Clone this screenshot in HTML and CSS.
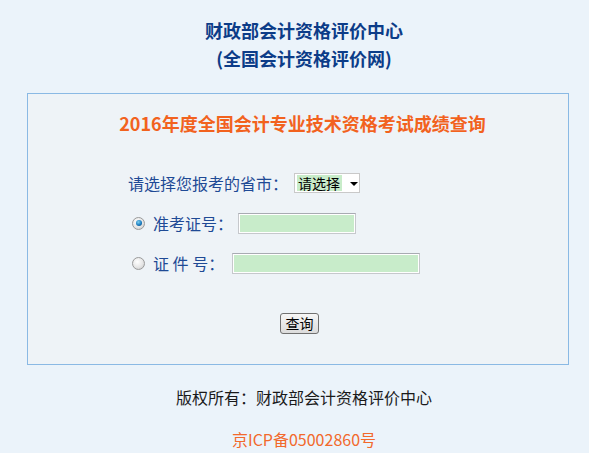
FILE: index.html
```html
<!DOCTYPE html>
<html lang="zh-CN">
<head>
<meta charset="utf-8">
<title>成绩查询</title>
<link rel="stylesheet" href="styles.css">
</head>
<body>
<div class="header">
  <div class="h-line">财政部会计资格评价中心</div>
  <div class="h-line">(全国会计资格评价网)</div>
</div>
<div class="box">
  <div class="title">2016年度全国会计专业技术资格考试成绩查询</div>
  <div class="form">
    <div class="row row-province">
      <span class="label">请选择您报考的省市：</span>
      <span class="select"><span class="sel-text">请选择</span><span class="arrow"></span></span>
    </div>
    <div class="row">
      <span class="radio checked"></span>
      <span class="label">准考证号：</span>
      <span class="input input-short"></span>
    </div>
    <div class="row">
      <span class="radio"></span>
      <span class="label">证 件 号：</span>
      <span class="input input-long"></span>
    </div>
    <div class="btn-row">
      <span class="btn">查询</span>
    </div>
  </div>
</div>
<div class="copyright">版权所有：财政部会计资格评价中心</div>
<div class="icp">京ICP备05002860号</div>
</body>
</html>
```

FILE: styles.css
```css
html, body {
  margin: 0;
  padding: 0;
}
body {
  background: #ebf3fa;
  font-family: "Noto Sans CJK SC", "Noto Sans", "Liberation Sans", sans-serif;
  width: 589px;
  height: 453px;
  overflow: hidden;
}
.header {
  padding: 16px 0 0 19px;
  height: 93px;
  box-sizing: border-box;
  text-align: center;
  color: #0c3c88;
  font-weight: bold;
  font-size: 18px;
}
.h-line {
  height: 28px;
  line-height: 28px;
}
.box {
  margin-left: 27px;
  width: 540px;
  height: 270px;
  border: 1px solid #8ab9e4;
  background: #eef3f7;
}
.title {
  padding: 15px 0 0 9px;
  height: 28px;
  line-height: 28px;
  text-align: center;
  color: #f2621e;
  font-size: 18px;
  font-weight: bold;
}
.form {
  padding: 36px 0 0 100px;
  color: #1f4a95;
  font-size: 16px;
}
.row {
  display: flex;
  align-items: center;
  height: 20px;
  margin-bottom: 20px;
}
.row-province {
  margin-bottom: 20px;
}
.label {
  line-height: 20px;
  white-space: pre;
}
.row .radio + .label {
  margin-left: 8px;
}
.select {
  margin-left: 6px;
  width: 64px;
  height: 18px;
  border: 1px solid #c9c9c9;
  background: #fff;
  display: flex;
  align-items: center;
  position: relative;
}
.sel-text {
  margin-left: 2px;
  background: #c8ecc9;
  color: #000;
  font-size: 14px;
  line-height: 16px;
  height: 16px;
  padding: 0 2px 0 1px;
}
.arrow {
  margin-left: 8px;
  width: 0;
  height: 0;
  border-left: 4px solid transparent;
  border-right: 4px solid transparent;
  border-top: 4px solid #000;
  margin-top: 2px;
}
.radio {
  margin-left: 4px;
  width: 11px;
  height: 11px;
  border-radius: 50%;
  border: 1px solid #9a9a9a;
  background: radial-gradient(circle at 40% 35%, #ffffff 0%, #e6e6e6 55%, #c4c4c4 100%);
  position: relative;
}
.radio.checked::after {
  content: "";
  position: absolute;
  left: 2.5px;
  top: 2.5px;
  width: 6px;
  height: 6px;
  border-radius: 50%;
  background: radial-gradient(circle at 40% 35%, #7fd0f0 0%, #1a7cc0 55%, #0a3d6e 100%);
}
.input {
  display: block;
  box-sizing: border-box;
  height: 21px;
  border: 1px solid #c6c8cc;
  border-top-color: #a8abb2;
  box-shadow: inset 0 0 0 1px #ffffff;
  background: #c8ecca;
}
.input-short {
  margin-left: 5px;
  width: 118px;
}
.input-long {
  margin-left: 8px;
  width: 188px;
}
.btn-row {
  padding-top: 17px;
  padding-left: 152px;
}
.btn {
  display: inline-block;
  box-sizing: border-box;
  width: 39px;
  height: 21px;
  border: 1px solid #707070;
  border-radius: 3px;
  background: linear-gradient(#f6f6f6, #dcdcdc);
  color: #000;
  font-size: 14px;
  line-height: 19px;
  text-align: center;
}
.copyright {
  margin-top: 21px;
  padding-left: 19px;
  text-align: center;
  color: #1a1a1a;
  font-size: 16px;
  line-height: 22px;
}
.icp {
  margin-top: 20px;
  padding-left: 19px;
  text-align: center;
  color: #f2692c;
  font-size: 16px;
  line-height: 22px;
}
```
